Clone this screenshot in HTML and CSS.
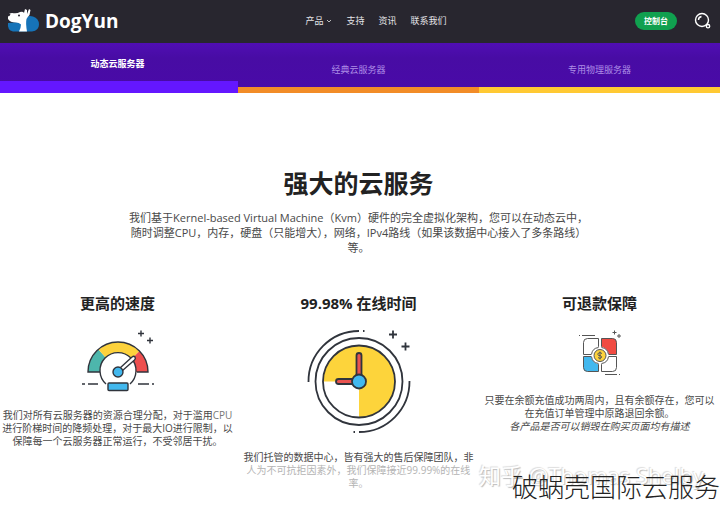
FILE: index.html
```html
<!DOCTYPE html>
<html lang="zh-CN">
<head>
<meta charset="utf-8">
<meta name="viewport" content="width=device-width, initial-scale=1">
<title>DogYun</title>
<link rel="stylesheet" href="styles.css">
</head>
<body>
<header class="header">
  <a class="brand" href="#">
    <svg class="brand-mark" viewBox="6 8 34 26" aria-hidden="true">
      <path fill="#1673b8" d="M8 23q-1 7 5 8.500h19q7-1 7-7 0-6-6-8-3-1-6 0l-5 5-8 1z"/>
      <path fill="#fff" d="M8 15q1-2 4-2 5 1 8-1 3-1 4 1l1-4 2 1v4l2-5 1.500 1-1 5q-2 2-3 4-1 4 .5 12.500h-8q2-4 2-7-2-2-5-2-6 0-8-3.500z"/>
      <path fill="#28262f" d="M7.500 14.500q1.500-1.500 3-.5l-1 2-2 .5z"/>
      <circle cx="19" cy="15.500" r="1" fill="#28262f"/>
    </svg>
    <span>DogYun</span>
  </a>
  <nav class="nav">
    <a href="#">产品<svg class="caret" viewBox="0 0 6 4" aria-hidden="true"><path d="M1 1l2 2 2-2"/></svg></a>
    <a href="#">支持</a>
    <a href="#">资讯</a>
    <a href="#">联系我们</a>
  </nav>
  <div class="actions">
    <button class="console" type="button">控制台</button>
    <button class="search" type="button" aria-label="搜索">
      <svg viewBox="0 0 18 18" aria-hidden="true"><circle cx="8" cy="8" r="6.500"/><path d="M4.500 8Q4.500 5 7.500 4.500"/><circle cx="14" cy="14.200" r="1.700"/></svg>
    </button>
  </div>
</header>

<nav class="tabs">
  <a class="tab tab-active" href="#">动态云服务器</a>
  <a class="tab tab-classic" href="#">经典云服务器</a>
  <a class="tab tab-dedicated" href="#">专用物理服务器</a>
</nav>

<main class="main">
  <h2>强大的云服务</h2>
  <p class="lead">我们基于Kernel-based Virtual Machine（Kvm）硬件的完全虚拟化架构，您可以在动态云中，<br>随时调整CPU，内存，硬盘（只能增大），网络，IPv4路线（如果该数据中心接入了多条路线）<br>等。</p>
  <div class="features">
    <section class="feature">
      <h3>更高的速度</h3>
      <svg class="art-speed" viewBox="72 325 90 70" aria-hidden="true">
        <path fill="#4db6ac" d="M87 372a30 30 0 0 1 10.500-22.500l8 9q-7 6-6.500 13.500z"/>
        <path fill="#fdd23c" d="M97.500 349.500a30 30 0 0 1 41 1.500l-8 8a18.500 18.500 0 0 0-25-.5z"/>
        <path fill="#ee4f4f" d="M138.500 351a30 30 0 0 1 8.500 21h-12q0-8-4.500-13z"/>
        <g class="line">
          <path d="M99 372H87a30 30 0 0 1 60 0h-11"/>
          <path fill="#fff" d="M105 384a18 18 0 1 1 24 0"/>
          <path fill="#fff" d="M119 368l12-11q2-1.500 3 0t-.5 3L121 371z"/>
          <circle cx="117" cy="372" r="5" fill="#42b8ee"/>
          <rect x="107" y="383" width="20" height="7.500" rx="1" fill="#42b8ee"/>
          <path d="M81 384h3M87 384h10M137 384h11M151 384h2M140 330.500v6M137 333.500h6M149 337.500v6M146 340.500h6"/>
        </g>
      </svg>
      <p>我们对所有云服务器的资源合理分配，对于滥用<span class="soft">CPU</span><br>进行阶梯时间的降频处理，对于最大IO进行限制，以<br>保障每一个云服务器正常运行，不受邻居干扰。</p>
    </section>
    <section class="feature">
      <h3>99.98% 在线时间</h3>
      <svg class="art-clock" viewBox="298 325 120 112" aria-hidden="true">
        <path fill="#fdd43b" d="M358 381.500h-36a36 36 0 1 1 36 36z"/>
        <g class="line line-bold">
          <circle cx="358" cy="381.500" r="36"/>
          <circle cx="358" cy="381.500" r="43.500"/>
          <path d="M307.500 382a50.500 50.500 0 0 1 50.500-51M362 331h1.500M408.500 381a50.500 50.500 0 0 1-50.500 51M354 432h-1.500"/>
          <rect x="355.500" y="353" width="5" height="24" rx="2.500" fill="#e95350"/>
          <rect x="335" y="379" width="20" height="5" rx="2.500" fill="#e95350"/>
          <circle cx="358" cy="381.500" r="7" fill="#42b8ee"/>
          <path d="M392 330.500v8M388 334.500h8M404.500 342.500v8M400.500 346.500h8"/>
        </g>
      </svg>
      <p>我们托管的数据中心，皆有强大的售后保障团队，非<br><span class="faded">人为不可抗拒因素外，我们保障接近99.99%的在线<br>率。</span></p>
    </section>
    <section class="feature">
      <h3>可退款保障</h3>
      <svg class="art-refund" viewBox="569 325 60 55" aria-hidden="true">
        <g class="line line-thin">
          <path fill="#fff" d="M597.500 354.500h-15v-12q0-4 4-4h11z"/>
          <path fill="#f14b42" d="M600.500 354.500h15v-12q0-4-4-4h-11z"/>
          <path fill="#42b8ee" d="M597.500 356.500h-15v11q0 4 4 4h11z"/>
          <path fill="#fff" d="M600.500 356.500h15v11q0 4-4 4h-11z"/>
          <circle cx="599" cy="355.500" r="8.500" fill="#fff" stroke="#fff"/>
          <path d="M597.500 347.500a8 8 0 0 0-7 7M600.500 347.500a8 8 0 0 1 7 7M597.500 363.500a8 8 0 0 1-7-7M600.500 363.500a8 8 0 0 0 7-7"/>
          <circle cx="599" cy="355.500" r="6" fill="#fdd23c"/>
          <path d="M601 353.500q-2-1.500-3.500-.5t0 2.500h2q2 1.500.5 2.500t-3-.5M599 351.500v8"/>
          <path d="M578 335.500h1M581 335.500h13M604 374.500h12M618 374.500h1M613.500 330.500v4M611.500 332.500h4M618 334v4M616 336h4"/>
        </g>
      </svg>
      <p>只要在余额充值成功两周内，且有余额存在，您可以<br>在充值订单管理中原路退回余额。<br><i>各产品是否可以销毁在购买页面均有描述</i></p>
    </section>
  </div>
</main>
<div class="credit">知乎 @Thomas Shelby</div>
<div class="caption">破蜗壳国际云服务</div>
</body>
</html>
```
FILE: styles.css
```css
* { box-sizing: border-box; }

body {
  position: relative;
  margin: 0;
  min-height: 100vh;
  overflow-x: hidden;
  background: #fff;
  color: #484848;
  font-family: "Open Sans", "Noto Sans CJK SC", sans-serif;
  font-size: 10px;
  line-height: 13px;
}

a { color: inherit; text-decoration: none; }
h2, h3, p { margin: 0; }
svg { display: block; }

.header {
  display: grid;
  grid-template-columns: 1fr auto 1fr;
  align-items: center;
  height: 43px;
  padding: 0 8px 2px 6px;
  background: #28262f;
  color: #fff;
}

.brand {
  display: flex;
  align-items: center;
  gap: 5px;
  font-size: 19px;
  font-weight: 700;
  line-height: 24px;
}
.brand-mark { width: 34px; height: 26px; }

.nav {
  display: flex;
  gap: 14px;
  padding-left: 34px;
  color: #e4e4e8;
  font-size: 9px;
}
.nav a { display: flex; align-items: center; gap: 3px; }
.caret { width: 6px; height: 4px; fill: none; stroke: #bbb; }

.actions {
  display: flex;
  align-items: center;
  justify-content: flex-end;
  gap: 17px;
}
.console {
  height: 18px;
  padding: 0 9px;
  border: 0;
  border-radius: 9px;
  background: #10a04f;
  color: #fff;
  font: 700 8px/18px "Noto Sans CJK SC", sans-serif;
}
.search {
  padding: 0;
  border: 0;
  background: none;
}
.search svg {
  width: 18px;
  height: 18px;
  fill: none;
  stroke: #fff;
  stroke-width: 1.4;
}

.tabs {
  display: grid;
  grid-template-columns: repeat(3, 1fr);
  height: 50px;
  margin-left: -3px;
  background: linear-gradient(#500eb4, #480ca4 30%, #490aa8);
}
.tab {
  display: flex;
  align-items: center;
  justify-content: center;
  padding-top: 8px;
  border-bottom: 6px solid;
  color: #ae8ee6;
  font-size: 9px;
}
.tab-active {
  padding-top: 2px;
  border-bottom: 12px solid #6417ff;
  color: #fff;
  font-weight: 700;
}
.tab-classic { border-bottom-color: #f28c28; }
.tab-dedicated { border-bottom-color: #ffc933; }

.main {
  margin-left: -3px;
  padding-top: 75px;
  text-align: center;
}
h2 {
  color: #222;
  font-size: 25px;
  line-height: 30px;
}
.lead {
  margin-top: 12px;
  font-size: 11px;
  line-height: 15px;
}
.features {
  display: grid;
  grid-template-columns: repeat(3, 1fr);
  margin-top: 38px;
}
.feature {
  display: flex;
  flex-direction: column;
  align-items: center;
}
h3 {
  margin-bottom: 12px;
  color: #222;
  font-size: 15px;
  line-height: 20px;
}
.feature p { margin-top: 14px; white-space: nowrap; }
.soft { color: #777; }
.faded { color: #b4b4b4; }

.art-speed { width: 90px; height: 70px; }
.art-clock { width: 120px; height: 112px; }
.art-refund { width: 60px; height: 55px; }
.line { fill: none; stroke: #30343c; stroke-width: 1.4; }
.line-bold { stroke-width: 1.8; }
.line-thin { stroke: #555; stroke-width: 1; }

.credit,
.caption {
  position: absolute;
  right: 0;
  white-space: nowrap;
}
.credit {
  right: 16px;
  bottom: 18px;
  color: #fff;
  font-size: 22px;
  line-height: 28px;
  text-shadow: 1px 1px 1px #bbb, -1px -1px 1px #ddd;
}
.caption {
  bottom: 4px;
  color: #222;
  font-size: 26px;
  font-weight: 300;
  line-height: 32px;
}
```
